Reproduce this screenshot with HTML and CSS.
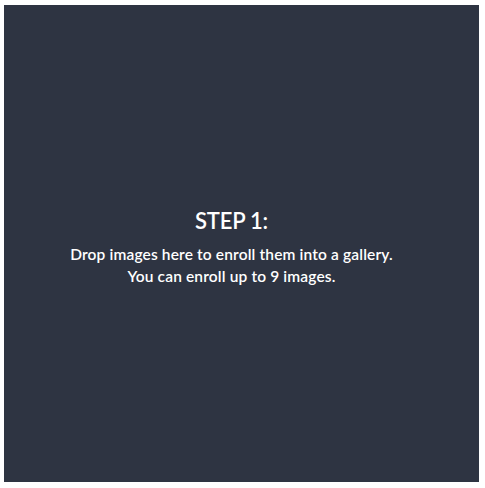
FILE: index.html
```html
<!DOCTYPE html>
<html>
<head>
<meta charset="utf-8">
<link rel="stylesheet" href="styles.css">
</head>
<body>
<div class="dropzone">
  <div class="message">
    <h2 class="title">STEP 1:</h2>
    <p class="desc">Drop images here to enroll them into a gallery.<br>You can enroll up to 9 images.</p>
  </div>
</div>
</body>
</html>
```
FILE: styles.css
```css
html, body {
  margin: 0;
  padding: 0;
  background: #ffffff;
}
body {
  padding: 5px 6px 6px 4px;
  font-family: Lato, "Open Sans", sans-serif;
}
.dropzone {
  width: 475px;
  height: 477px;
  background: #2e3442;
  display: flex;
  align-items: center;
  justify-content: center;
  padding-right: 20px;
  padding-top: 8px;
  box-sizing: border-box;
}
.message {
  text-align: center;
  color: #ffffff;
}
.title {
  margin: 0 0 9px;
  font-size: 22px;
  font-weight: 600;
  line-height: 26px;
  letter-spacing: -0.2px;
}
.desc {
  margin: 0;
  font-size: 15.5px;
  font-weight: 600;
  line-height: 22px;
  letter-spacing: 0.15px;
}
```
